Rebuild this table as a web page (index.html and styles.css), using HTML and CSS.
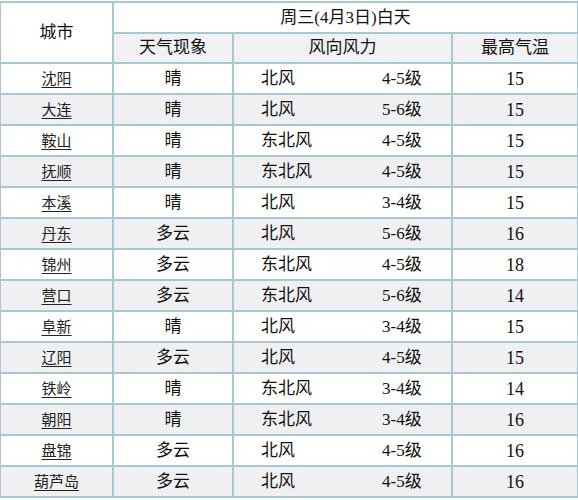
FILE: index.html
```html
<!DOCTYPE html>
<html lang="zh">
<head>
<meta charset="utf-8">
<title>天气预报</title>
<link rel="stylesheet" href="styles.css">
</head>
<body>
<table class="weather">
  <colgroup>
    <col class="c-city"><col class="c-wx"><col class="c-wind"><col class="c-temp">
  </colgroup>
  <thead>
    <tr class="h1">
      <th rowspan="2" class="city-h">城市</th>
      <th colspan="3" class="title">周三(4月3日)白天</th>
    </tr>
    <tr class="h2">
      <th>天气现象</th>
      <th>风向风力</th>
      <th>最高气温</th>
    </tr>
  </thead>
  <tbody>
    <tr><td class="city"><a>沈阳</a></td><td>晴</td><td class="wind"><span class="dir">北风</span><span class="lv">4-5级</span></td><td class="num">15</td></tr>
    <tr><td class="city"><a>大连</a></td><td>晴</td><td class="wind"><span class="dir">北风</span><span class="lv">5-6级</span></td><td class="num">15</td></tr>
    <tr><td class="city"><a>鞍山</a></td><td>晴</td><td class="wind"><span class="dir">东北风</span><span class="lv">4-5级</span></td><td class="num">15</td></tr>
    <tr><td class="city"><a>抚顺</a></td><td>晴</td><td class="wind"><span class="dir">东北风</span><span class="lv">4-5级</span></td><td class="num">15</td></tr>
    <tr><td class="city"><a>本溪</a></td><td>晴</td><td class="wind"><span class="dir">北风</span><span class="lv">3-4级</span></td><td class="num">15</td></tr>
    <tr><td class="city"><a>丹东</a></td><td>多云</td><td class="wind"><span class="dir">北风</span><span class="lv">5-6级</span></td><td class="num">16</td></tr>
    <tr><td class="city"><a>锦州</a></td><td>多云</td><td class="wind"><span class="dir">东北风</span><span class="lv">4-5级</span></td><td class="num">18</td></tr>
    <tr><td class="city"><a>营口</a></td><td>多云</td><td class="wind"><span class="dir">东北风</span><span class="lv">5-6级</span></td><td class="num">14</td></tr>
    <tr><td class="city"><a>阜新</a></td><td>晴</td><td class="wind"><span class="dir">北风</span><span class="lv">3-4级</span></td><td class="num">15</td></tr>
    <tr><td class="city"><a>辽阳</a></td><td>多云</td><td class="wind"><span class="dir">北风</span><span class="lv">4-5级</span></td><td class="num">15</td></tr>
    <tr><td class="city"><a>铁岭</a></td><td>晴</td><td class="wind"><span class="dir">东北风</span><span class="lv">3-4级</span></td><td class="num">14</td></tr>
    <tr><td class="city"><a>朝阳</a></td><td>晴</td><td class="wind"><span class="dir">东北风</span><span class="lv">3-4级</span></td><td class="num">16</td></tr>
    <tr><td class="city"><a>盘锦</a></td><td>多云</td><td class="wind"><span class="dir">北风</span><span class="lv">4-5级</span></td><td class="num">16</td></tr>
    <tr><td class="city"><a>葫芦岛</a></td><td>多云</td><td class="wind"><span class="dir">北风</span><span class="lv">4-5级</span></td><td class="num">16</td></tr>
  </tbody>
</table>
</body>
</html>
```
FILE: styles.css
```css
html, body {
  margin: 0;
  padding: 0;
  background: #ffffff;
}
body {
  padding-top: 1px;
  font-family: "Liberation Serif", "Noto Sans CJK SC", serif;
  color: #111111;
}
.weather {
  border-collapse: collapse;
  table-layout: fixed;
  width: 578px;
  margin-left: -1px;
}
.c-city { width: 113px; }
.c-wx { width: 120px; }
.c-wind { width: 219px; }
.c-temp { width: 126px; }
.weather th,
.weather td {
  border: 2px solid #a9c7d3;
  padding: 0;
  text-align: center;
  vertical-align: middle;
  font-weight: normal;
  font-size: 17px;
  line-height: 20px;
}
.h1 th { height: 29px; background: #ffffff; }
.h2 th { height: 28px; background: #f1f1f3; }
.city-h { background: #ffffff; }
.weather tbody td { height: 29px; }
.weather tbody tr:nth-child(even) td { background: #f0f0f2; }
.city a {
  font-size: 15px;
  color: #222222;
  text-decoration: underline;
  text-underline-offset: 3px;
  text-decoration-thickness: 1px;
}
.wind {
  text-align: left !important;
}
.wind .dir {
  display: inline-block;
  width: 121px;
  padding-left: 27px;
}
.wind .lv { display: inline-block; }
.num { font-size: 18px !important; }
```
